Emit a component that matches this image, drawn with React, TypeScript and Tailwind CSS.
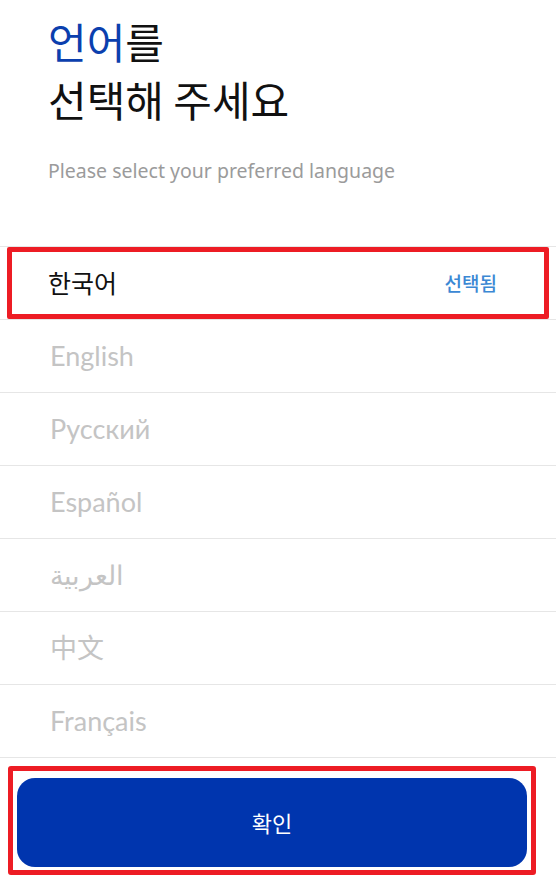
import React from 'react'

const LANGUAGES = ['English', 'Русский', 'Español', 'العربية', '中文', 'Français']

const KR = '"Noto Sans CJK KR", "Noto Sans", sans-serif'
const LATIN = 'Lato, "Noto Sans", "Noto Sans CJK SC", sans-serif'

export default function App() {
  return (
    <div className="w-[556px] h-[876px] bg-white flex flex-col overflow-hidden" style={{ fontFamily: KR }}>
      <header className="pl-[48px] pt-[12px]">
        <h1 className="text-[42px] leading-[58px] font-normal text-[#111]">
          <span className="text-[#0b3fae]">언어</span>를
          <br />
          선택해 주세요
        </h1>
        <p className="mt-[31px] text-[19.5px] leading-[24px] text-[#9b9b9b]" style={{ fontFamily: '"Noto Sans", sans-serif' }}>
          Please select your preferred language
        </p>
      </header>

      <ul className="mt-[63px] border-t border-[#e6e6e6]">
        <li className="h-[73px] px-[7px] border-b border-[#e6e6e6]">
          <div className="h-full flex items-center justify-between pl-[36px] pr-[47px] border-[5px] border-[#ed1c24] rounded-[2px]">
            <span className="text-[25px] text-[#111]">한국어</span>
            <span className="text-[19px] font-medium text-[#3b88d4]">선택됨</span>
          </div>
        </li>
        {LANGUAGES.map((lang) => (
          <li
            key={lang}
            className="h-[73px] flex items-center pl-[50px] border-b border-[#e6e6e6] text-[27px] text-[#c4c4c4]"
            style={{ fontFamily: LATIN }}
          >
            {lang}
          </li>
        ))}
      </ul>

      <div className="ml-[8px] mt-[8px] w-[528px] h-[109px] border-[5px] border-[#ed1c24] rounded-[3px] pl-[4px] pt-[7px]">
        <button className="w-[510px] h-[89px] rounded-[18px] bg-[#0035ae] text-white text-[22px] flex items-center justify-center">
          확인
        </button>
      </div>
    </div>
  )
}
